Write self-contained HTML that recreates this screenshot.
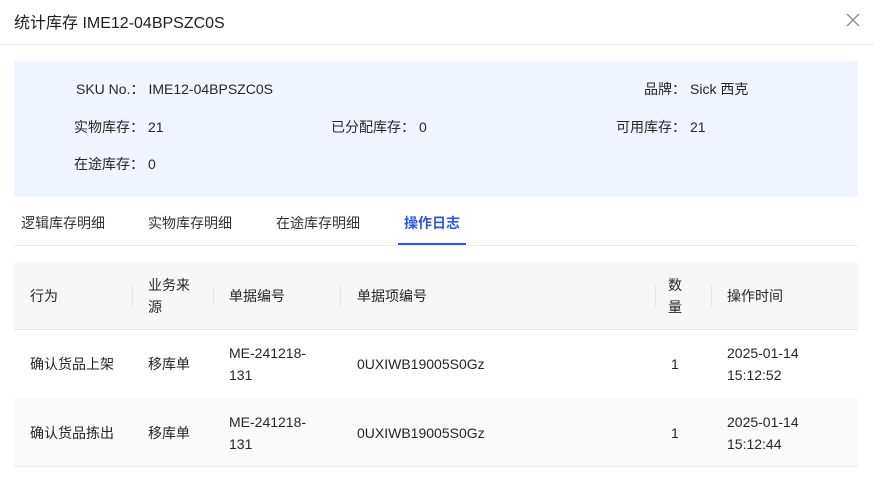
<!DOCTYPE html>
<html><head><meta charset="utf-8"><style>
*{margin:0;padding:0;box-sizing:border-box}
body{width:874px;height:480px;background:#fff;font-family:"Liberation Sans","Noto Sans CJK SC",sans-serif;color:#262626;font-size:14px;position:relative;overflow:hidden}
.a{position:absolute;white-space:nowrap}
.hdr{left:0;top:0;width:874px;height:45px;border-bottom:1px solid #ebebeb}
.title{left:14px;top:9px;font-size:16px;color:#1f1f1f}
.info{left:14px;top:61px;width:844px;height:136px;background:#f0f5ff}
.tabs{left:14px;top:245px;width:844px;height:1px;background:#ebebeb}
.tab{top:213px;font-size:14px;color:#333}
.thead{left:14px;top:262px;width:844px;height:68px;background:#f7f7f7;border-bottom:1px solid #e8e8e8}
.row{left:14px;width:844px;height:69px;border-bottom:1px solid #e8e8e8}
.div{width:1px;height:22px;background:#e6e6e6;top:285px}
.c{line-height:22px}
.k{margin-right:4px}
</style></head><body>
<div class="a hdr"></div>
<div class="a title">统计库存 IME12-04BPSZC0S</div>
<svg class="a" style="left:845px;top:12px" width="16" height="16" viewBox="0 0 16 16"><path d="M2 2L14 14M14 2L2 14" stroke="#8c8c8c" stroke-width="1.3"/></svg>
<div class="a info"></div>
<div class="a" style="left:76px;top:79px">SKU No.<span class="k">：</span>IME12-04BPSZC0S</div>
<div class="a" style="left:644px;top:79px">品牌<span class="k">：</span>Sick 西克</div>
<div class="a" style="left:74px;top:117px">实物库存<span class="k">：</span>21</div>
<div class="a" style="left:331px;top:117px">已分配库存<span class="k">：</span>0</div>
<div class="a" style="left:616px;top:117px">可用库存<span class="k">：</span>21</div>
<div class="a" style="left:74px;top:154px">在途库存<span class="k">：</span>0</div>
<div class="a tab" style="left:21px">逻辑库存明细</div>
<div class="a tab" style="left:148px">实物库存明细</div>
<div class="a tab" style="left:276px">在途库存明细</div>
<div class="a tab" style="left:404px;color:#2f54eb;font-weight:bold">操作日志</div>
<div class="a tabs"></div>
<div class="a" style="left:398px;top:243px;width:68px;height:2px;background:#2f54eb"></div>
<div class="a thead"></div>
<div class="a div" style="left:132px"></div><div class="a div" style="left:213px"></div><div class="a div" style="left:340px"></div><div class="a div" style="left:655px"></div><div class="a div" style="left:711px"></div>
<div class="a c" style="left:30px;top:285px">行为</div>
<div class="a c" style="left:148px;top:274px">业务来<br>源</div>
<div class="a c" style="left:229px;top:285px">单据编号</div>
<div class="a c" style="left:357px;top:285px">单据项编号</div>
<div class="a c" style="left:668px;top:274px">数<br>量</div>
<div class="a c" style="left:727px;top:285px">操作时间</div>
<div class="a row" style="top:330px"></div>
<div class="a row" style="top:398px;background:#fafafa"></div>
<div class="a c" style="left:30px;top:353px">确认货品上架</div>
<div class="a c" style="left:148px;top:353px">移库单</div>
<div class="a c" style="left:229px;top:342px">ME-241218-<br>131</div>
<div class="a c" style="left:357px;top:353px">0UXIWB19005S0Gz</div>
<div class="a c" style="left:671px;top:353px">1</div>
<div class="a c" style="left:727px;top:342px">2025-01-14<br>15:12:52</div>
<div class="a c" style="left:30px;top:422px">确认货品拣出</div>
<div class="a c" style="left:148px;top:422px">移库单</div>
<div class="a c" style="left:229px;top:411px">ME-241218-<br>131</div>
<div class="a c" style="left:357px;top:422px">0UXIWB19005S0Gz</div>
<div class="a c" style="left:671px;top:422px">1</div>
<div class="a c" style="left:727px;top:411px">2025-01-14<br>15:12:44</div>
</body></html>
